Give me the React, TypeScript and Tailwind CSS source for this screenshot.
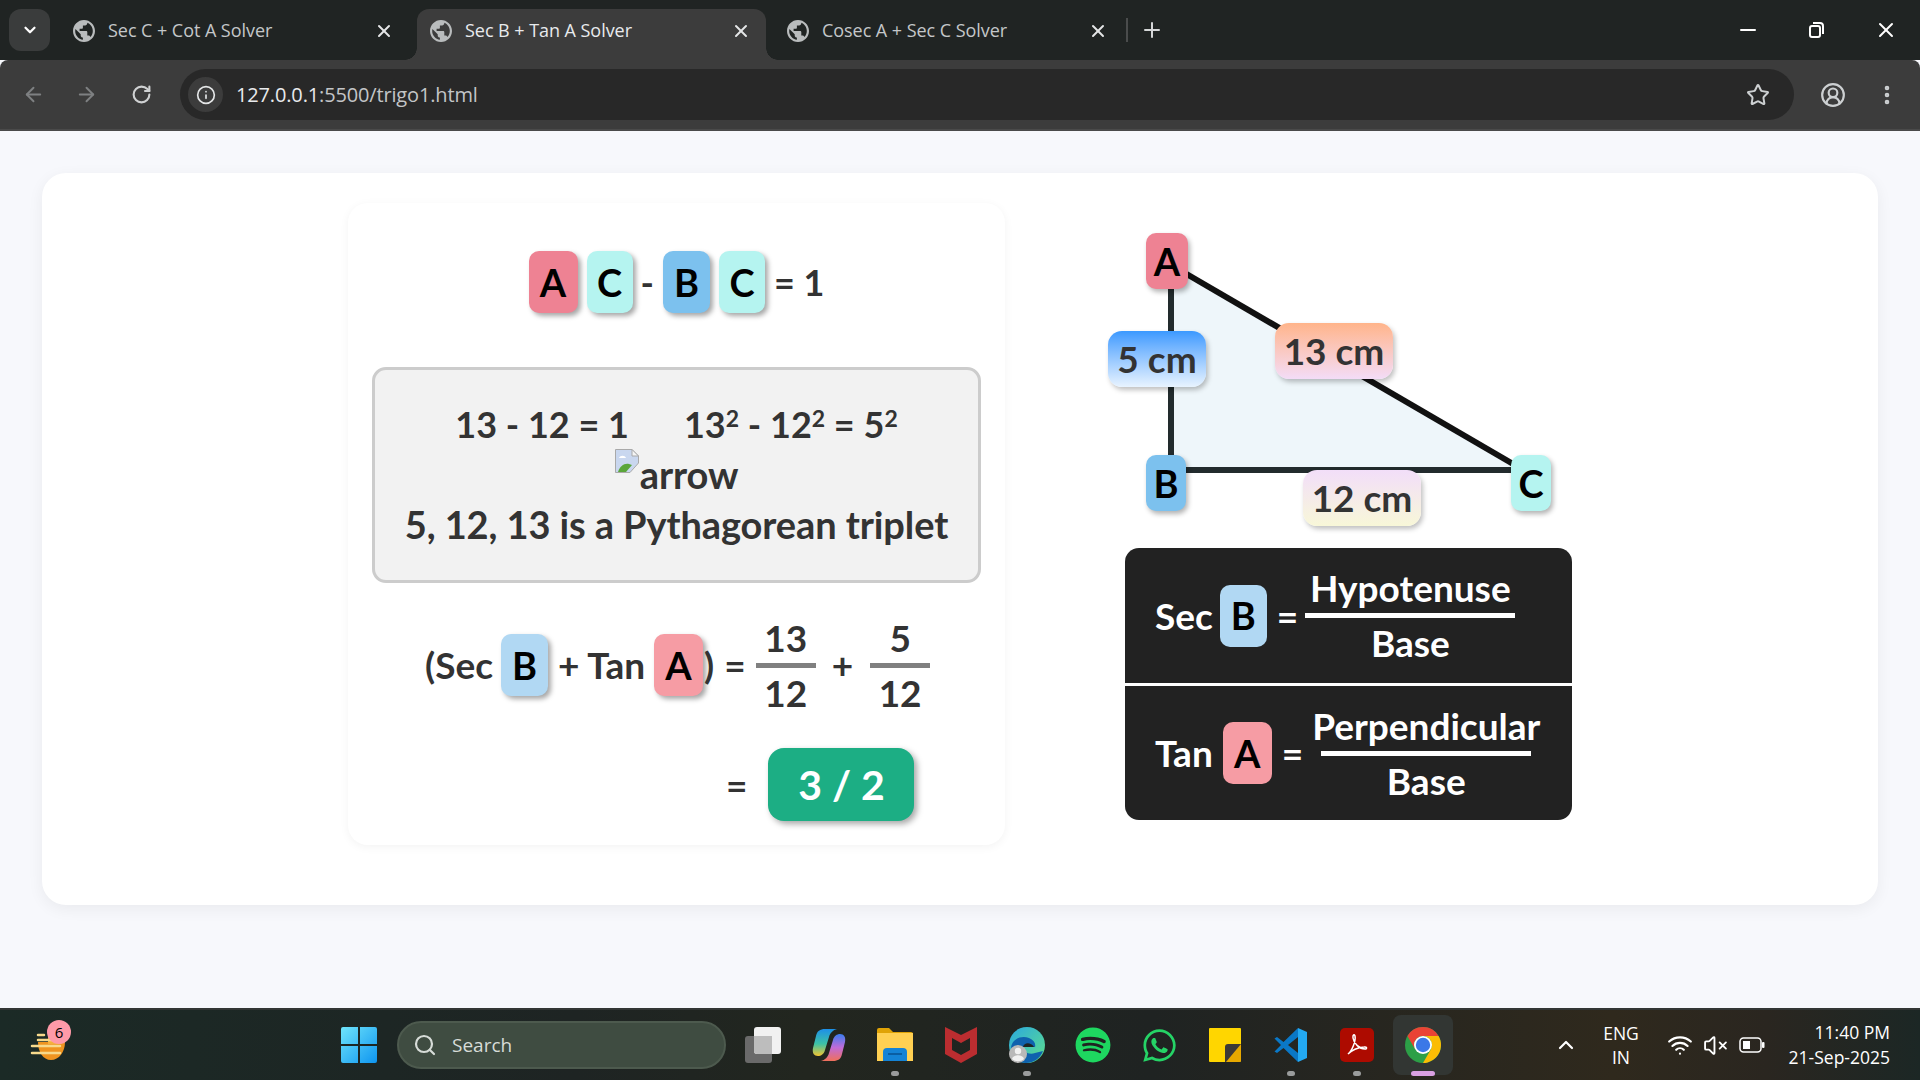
import { ArrowLeft, ArrowRight, ChevronDown, ChevronUp, CircleUserRound, EllipsisVertical, Info, Minus, Plus, RotateCw, Search, Star, VolumeX, Wifi, X } from 'lucide-react'
import type { ReactNode } from 'react'
import { FaSpotify, FaWhatsapp } from 'react-icons/fa'

const RED = 'bg-[#ee8293]'
const CYAN = 'bg-[#b5f4f0]'
const BLUE = 'bg-[#7cc1ee]'
const SOFT_BLUE = 'bg-[#b1d8f3]'
const SOFT_RED = 'bg-[#f69ca4]'

function Favicon() {
    return (
        <svg className="h-[22px] w-[22px] shrink-0" viewBox="2 2 20 20" fill="#b9bcbd">
            <path d="M12 2C6.48 2 2 6.48 2 12s4.48 10 10 10 10-4.48 10-10S17.52 2 12 2zm-1 17.93c-3.95-.49-7-3.85-7-7.93 0-.62.08-1.21.21-1.79L9 15v1c0 1.1.9 2 2 2v1.93zm6.9-2.54c-.26-.81-1-1.39-1.9-1.39h-1v-3c0-.55-.45-1-1-1H8v-2h2c.55 0 1-.45 1-1V7h2c1.1 0 2-.9 2-2v-.41c2.93 1.19 5 4.06 5 7.41 0 2.08-.8 3.97-2.1 5.39z" />
        </svg>
    )
}

function Tab({ title, active }: { title: string; active?: boolean }) {
    return (
        <div className={`relative flex h-[51px] w-[349px] items-center pb-[8px] pl-[13px] pr-[15px] ${active ? 'rounded-t-[12px] bg-[#3c3c3c] text-[#e8eaed]' : 'text-[#c4c7c9]'}`}>
            {active && <span className="absolute bottom-0 left-[-12px] h-[12px] w-[12px] bg-[radial-gradient(circle_at_0_0,transparent_11.5px,#3c3c3c_12px)]" />}
            {active && <span className="absolute bottom-0 right-[-12px] h-[12px] w-[12px] bg-[radial-gradient(circle_at_100%_0,transparent_11.5px,#3c3c3c_12px)]" />}
            <Favicon />
            <span className="ml-[13px] flex-1 text-[18px] tracking-[-0.05px]">{title}</span>
            <X size={20} strokeWidth={2.4} className="text-[#e4e6e7]" />
        </div>
    )
}

function BrowserChrome() {
    return (
        <div className="[font-family:'Open_Sans',sans-serif]">
            <div className="flex h-[60px] bg-[#202423]">
                <div className="ml-[9px] mr-[10px] mt-[9px] flex h-[42px] w-[41px] items-center justify-center rounded-[12px] bg-[#3a3c3c]">
                    <ChevronDown size={18} strokeWidth={3} className="text-white" />
                </div>
                <div className="mt-[9px] flex gap-[8px]">
                    <Tab title="Sec C + Cot A Solver" />
                    <Tab title="Sec B + Tan A Solver" active />
                    <Tab title="Cosec A + Sec C Solver" />
                </div>
                <div className="ml-[3px] mt-[18px] h-[24px] w-[2px] bg-[#4a4c4c]" />
                <Plus size={24} strokeWidth={2} className="ml-[12px] mt-[18px] text-[#d5d7d8]" />
                <div className="ml-auto mr-[22px] mt-[18px] flex h-[24px] items-center gap-[45px] text-white">
                    <Minus size={24} strokeWidth={2} />
                    <svg className="h-[24px] w-[24px] -translate-x-[1px]" viewBox="0 0 24 24" fill="none" stroke="currentColor" strokeWidth="2">
                        <rect x="6" y="8" width="10" height="11" rx="2" />
                        <path d="M9 5h7a3 3 0 0 1 3 3v8" />
                    </svg>
                    <X size={24} strokeWidth={2} />
                </div>
            </div>
            <div className="flex h-[71px] items-start rounded-t-[8px] border-b-2 border-[#4a4a4a] bg-[#3c3c3c] pt-[9px] text-[#c7c7c7]">
                <div className="flex h-[51px] w-[180px] items-center pl-[22px]">
                    <ArrowLeft size={23} className="text-[#7e8082]" />
                    <ArrowRight size={23} className="ml-[30px] text-[#7e8082]" />
                    <RotateCw size={21} strokeWidth={2.4} className="ml-[33px] text-[#cfd1d2]" />
                </div>
                <div className="flex h-[51px] w-[1614px] items-center rounded-full bg-[#282828] pl-[8px] pr-[24px]">
                    <div className="flex h-[35px] w-[35px] items-center justify-center rounded-full bg-[#3c3c3c]">
                        <Info size={20} className="text-[#e4e6e7]" />
                    </div>
                    <span className="ml-[13px] text-[20px] tracking-[-0.15px] text-[#e8eaed]">
                        127.0.0.1<span className="text-[#c3c5c7]">:5500/trigo1.html</span>
                    </span>
                    <Star size={24} className="ml-auto text-[#cdd0d2]" />
                </div>
                <div className="flex h-[51px] items-center pl-[26px]">
                    <CircleUserRound size={26} className="text-[#cdd0d2]" />
                    <EllipsisVertical size={24} strokeWidth={2.6} className="ml-[29px] text-[#cdd0d2]" />
                </div>
            </div>
        </div>
    )
}

function Chip({ label, className }: { label: string; className: string }) {
    return (
        <span className={`flex h-[62px] shrink-0 items-center justify-center rounded-[10px] text-[38px] font-bold text-black shadow-[3px_3px_5px_rgba(0,0,0,0.35)] ${className}`}>
            {label}
        </span>
    )
}

function Fraction({ top, bottom }: { top: string; bottom: string }) {
    return (
        <div className="flex w-[60px] flex-col items-center">
            <span className="leading-[40px]">{top}</span>
            <span className="my-[5px] h-[5px] w-full bg-[#808080]" />
            <span className="leading-[40px]">{bottom}</span>
        </div>
    )
}

function BrokenImage() {
    return (
        <svg className="h-[24px] w-[24px] shrink-0" viewBox="0 0 24 24">
            <path d="M0.5 0.5H17L23.5 7V14L15 23.5H0.5Z" fill="#c9d7ef" stroke="#a9a9a9" />
            <path d="M17 0.5V7H23.5Z" fill="#f5f5f5" stroke="#a9a9a9" />
            <path d="M4 9c1-3 6-3 7 0z" fill="#ffffff" />
            <path d="M3 23c2-6 6-9 11-8l3 1-6 7z" fill="#5aa63a" />
        </svg>
    )
}

function LeftPanel() {
    return (
        <div className="flex h-[642px] w-[657px] shrink-0 flex-col rounded-[20px] pt-[48px] text-[#333333] shadow-[0_2px_10px_rgba(0,0,0,0.05)]">
            <div className="flex h-[62px] items-center justify-center text-[36px] font-bold">
                <Chip label="A" className={`w-[49px] ${RED}`} />
                <Chip label="C" className={`ml-[9px] w-[46px] ${CYAN}`} />
                <span className="ml-[8px] mr-[9px]">-</span>
                <Chip label="B" className={`w-[47px] ${BLUE}`} />
                <Chip label="C" className={`ml-[9px] w-[46px] ${CYAN}`} />
                <span className="ml-[9px]">= 1</span>
            </div>

            <div className="mx-[24px] mt-[54px] h-[216px] rounded-[14px] border-[3px] border-[#cccccc] bg-[#f2f2f2] pt-[29px] text-center text-[38px] font-bold leading-[50px] tracking-[-0.1px]">
                <div className="flex justify-center gap-[55px] text-[36px] tracking-normal">
                    <span>13 - 12 = 1</span>
                    <span>
                        13<sup className="text-[23px]">2</sup> - 12<sup className="text-[23px]">2</sup> = 5<sup className="text-[23px]">2</sup>
                    </span>
                </div>
                <div className="flex justify-center">
                    <BrokenImage />
                    <span className="ml-[1px]">arrow</span>
                </div>
                <div>5, 12, 13 is a Pythagorean triplet</div>
            </div>

            <div className="mt-[37px] flex h-[90px] items-center pl-[77px] text-[37px] font-bold">
                <span>(Sec</span>
                <Chip label="B" className={`ml-[8px] w-[47px] ${SOFT_BLUE}`} />
                <span className="ml-[10px] w-[86px] whitespace-nowrap">+ Tan</span>
                <Chip label="A" className={`ml-[10px] w-[49px] ${SOFT_RED}`} />
                <span className="ml-[1px]">)</span>
                <span className="ml-[10px]">=</span>
                <div className="ml-[10px]">
                    <Fraction top="13" bottom="12" />
                </div>
                <span className="ml-[16px]">+</span>
                <div className="ml-[17px]">
                    <Fraction top="5" bottom="12" />
                </div>
            </div>

            <div className="mt-[38px] flex items-center pl-[378px] text-[37px] font-bold">
                <span>=</span>
                <span className="ml-[21px] flex h-[73px] w-[146px] items-center justify-center rounded-[16px] bg-[#1cae84] text-[41px] text-white shadow-[3px_3px_6px_rgba(0,0,0,0.35)]">
                    3 / 2
                </span>
            </div>
        </div>
    )
}

function Triangle() {
    const node = 'absolute flex h-[56px] items-center justify-center rounded-[10px] text-[38px] font-bold text-black shadow-[2px_3px_5px_rgba(0,0,0,0.3)]'
    const side = 'absolute flex h-[56px] items-center justify-center rounded-[14px] text-[37px] font-bold text-[#333333] shadow-[2px_3px_5px_rgba(0,0,0,0.25)]'
    return (
        <div className="relative h-[293px] w-[464px]">
            <svg className="absolute inset-0 h-full w-full" viewBox="0 0 464 293">
                <polygon points="62,32 62,237 415,237" fill="#eef6fa" />
                <line x1="63" y1="40" x2="63" y2="240" stroke="#222b2d" strokeWidth="6" />
                <line x1="63" y1="237" x2="410" y2="237" stroke="#222b2d" strokeWidth="6" />
                <line x1="70" y1="36" x2="412" y2="235" stroke="#111111" strokeWidth="6" />
            </svg>
            <span className={`${node} left-[38px] top-0 w-[42px] ${RED}`}>A</span>
            <span className={`${node} left-[38px] top-[222px] w-[40px] ${BLUE}`}>B</span>
            <span className={`${node} left-[403px] top-[222px] w-[40px] ${CYAN}`}>C</span>
            <span className={`${side} left-0 top-[98px] w-[98px] bg-linear-to-b from-[#3a99ff] to-[#e8f3ff]`}>5 cm</span>
            <span className={`${side} left-[167px] top-[90px] w-[118px] bg-linear-to-b from-[#ffb48a] to-[#f3dcf7]`}>13 cm</span>
            <span className={`${side} left-[195px] top-[237px] w-[118px] bg-linear-to-b from-[#f2def9] to-[#f8f7d8]`}>12 cm</span>
        </div>
    )
}

function Formula({ name, chip, top, fracGap, chipGap, rowClass }: { name: string; chip: ReactNode; top: string; fracGap: string; chipGap: string; rowClass: string }) {
    return (
        <div className={`flex items-center pl-[30px] text-[37px] font-bold text-white ${rowClass}`}>
            <span>{name}</span>
            <span className={chipGap}>{chip}</span>
            <span className="ml-[10px]">=</span>
            <div className={`flex w-[210px] flex-col items-center ${fracGap}`}>
                <span className="whitespace-nowrap leading-[44px]">{top}</span>
                <span className="my-[3px] h-[5px] w-full bg-white" />
                <span className="leading-[44px]">Base</span>
            </div>
        </div>
    )
}

function RightColumn() {
    return (
        <div className="ml-[103px] pt-[30px]">
            <Triangle />
            <div className="ml-[17px] mt-[22px] w-[447px] overflow-hidden rounded-[14px] bg-[#222222]">
                <Formula name="Sec" chip={<Chip label="B" className={`w-[47px] !shadow-none ${SOFT_BLUE}`} />} top="Hypotenuse" fracGap="ml-[7px]" chipGap="ml-[7px]" rowClass="h-[135px]" />
                <div className="h-[3px] bg-white" />
                <Formula name="Tan" chip={<Chip label="A" className={`w-[49px] !shadow-none ${SOFT_RED}`} />} top="Perpendicular" fracGap="ml-[18px]" chipGap="ml-[10px]" rowClass="h-[134px]" />
            </div>
        </div>
    )
}

function Slot({ children, dot }: { children: ReactNode; dot?: 'open' | 'active' }) {
    return (
        <div className="relative flex h-[60px] w-[66px] items-center justify-center">
            {dot === 'active' && <span className="absolute inset-y-0 left-[3px] w-[60px] rounded-[8px] bg-[#323633]" />}
            <span className="relative flex">{children}</span>
            {dot === 'open' && <span className="absolute bottom-[-1px] h-[5px] w-[8px] rounded-full bg-[#9a9c9c]" />}
            {dot === 'active' && <span className="absolute bottom-[-1px] h-[5px] w-[24px] rounded-full bg-[#d9a0e2]" />}
        </div>
    )
}

function TaskbarIcons() {
    return (
        <>
            <Slot>
                <svg className="h-[36px] w-[36px]" viewBox="0 0 36 36">
                    <rect x="0" y="9" width="27" height="27" rx="3" fill="#6a6a6a" />
                    <rect x="9" y="0" width="27" height="27" rx="3" fill="#f1f1f1" />
                    <path d="M9 9h18v18H12a3 3 0 0 1-3-3z" fill="#bdbdbd" />
                </svg>
            </Slot>
            <Slot>
                <svg className="h-[36px] w-[36px]" viewBox="0 0 36 36">
                    <defs>
                        <linearGradient id="copilotA" x1="0" y1="0" x2="0" y2="1">
                            <stop offset="0" stopColor="#1d8fe8" />
                            <stop offset="0.55" stopColor="#3dc2a5" />
                            <stop offset="1" stopColor="#f2c531" />
                        </linearGradient>
                        <linearGradient id="copilotB" x1="0" y1="0" x2="0" y2="1">
                            <stop offset="0" stopColor="#3a7df0" />
                            <stop offset="0.5" stopColor="#c06bd8" />
                            <stop offset="1" stopColor="#f0705a" />
                        </linearGradient>
                    </defs>
                    <path d="M14 2h12c-4 1-7 4-8 8l-4 13c-1 4-4 6-7 6-4 0-6-3-5-8l3-12c1-5 4-7 9-7z" fill="url(#copilotA)" />
                    <path d="M22 34H10c4-1 7-4 8-8l4-13c1-4 4-6 7-6 4 0 6 3 5 8l-3 12c-1 5-4 7-9 7z" fill="url(#copilotB)" />
                </svg>
            </Slot>
            <Slot dot="open">
                <svg className="h-[36px] w-[36px]" viewBox="0 0 36 36">
                    <path d="M0 3a2 2 0 0 1 2-2h10l4 4h18a2 2 0 0 1 2 2v6H0z" fill="#e0a306" />
                    <path d="M0 6h36v28H0z" fill="#ffd052" />
                    <path d="M6 25a4 4 0 0 1 4-4h16a4 4 0 0 1 4 4v9H6z" fill="#1483d6" />
                    <rect x="11" y="26" width="14" height="2" fill="#0a5ea3" />
                </svg>
            </Slot>
            <Slot>
                <svg className="h-[36px] w-[32px]" viewBox="0 0 32 36">
                    <path fillRule="evenodd" d="M0 0l16 8 16-8v27l-16 9-16-9zM7 11v12l9 5 9-5V11l-9 5z" fill="#bb2d30" />
                </svg>
            </Slot>
            <Slot dot="open">
                <svg className="h-[36px] w-[36px]" viewBox="0 0 36 36">
                    <defs>
                        <linearGradient id="edgeA" x1="0" y1="0" x2="1" y2="1">
                            <stop offset="0" stopColor="#2aa8e0" />
                            <stop offset="1" stopColor="#5fe08a" />
                        </linearGradient>
                    </defs>
                    <circle cx="18" cy="18" r="18" fill="url(#edgeA)" />
                    <path d="M2 22C2 12 12 8 20 11c5 2 7 6 6 9H14c0 5 6 8 12 6l8-2c-3 8-10 12-17 12C8 36 2 30 2 22z" fill="#0f62ae" />
                    <path d="M14 20c1-5 8-5 11 0z" fill="#1f2423" />
                    <circle cx="9" cy="27" r="9" fill="#b9b9b9" />
                    <circle cx="9" cy="24" r="3.2" fill="#f1f1f1" />
                    <path d="M3 32c1-5 11-5 12 0-3 3-9 3-12 0z" fill="#f1f1f1" />
                </svg>
            </Slot>
            <Slot>
                <FaSpotify size={36} className="text-[#1ed760]" />
            </Slot>
            <Slot>
                <FaWhatsapp size={37} className="text-[#25d366]" />
            </Slot>
            <Slot>
                <svg className="h-[34px] w-[32px]" viewBox="0 0 32 34">
                    <path d="M0 1a1 1 0 0 1 1-1h30a1 1 0 0 1 1 1v32a1 1 0 0 1-1 1H1a1 1 0 0 1-1-1z" fill="#ffd600" />
                    <path d="M16 34V19a3 3 0 0 1 3-3h13v17a1 1 0 0 1-1 1z" fill="#3c3a36" />
                    <path d="M32 16v17a1 1 0 0 1-1 1H17z" fill="#e6a800" />
                </svg>
            </Slot>
            <Slot dot="open">
                <svg className="h-[36px] w-[36px]" viewBox="0 0 36 36">
                    <path d="M25 1L10.500 15 4 10 1.500 11.500 8 18l-6.500 6.500L4 26l6.500-5L25 35v-9L15 18l10-8z" fill="#0a78c7" />
                    <path d="M25 1l9 4v26l-9 4z" fill="#23a9f2" />
                </svg>
            </Slot>
            <Slot dot="open">
                <svg className="h-[34px] w-[34px]" viewBox="0 0 34 34">
                    <rect width="34" height="34" rx="5" fill="#ad0b00" />
                    <path d="M8 26c4-3 8-13 7-18-.5-2.500-2.500-1-2 2 .8 5 6 11 12 11 2.500 0 2-2.500-1-2-5 .5-12 3-16 7z" fill="none" stroke="#ffffff" strokeWidth="1.500" />
                </svg>
            </Slot>
            <Slot dot="active">
                <svg className="h-[36px] w-[36px]" viewBox="4 4 40 40">
                    <circle cx="24" cy="24" r="20" fill="#2c9f47" />
                    <path d="M24 4a20 20 0 0 1 17.32 10H24a10 10 0 0 0-8.66 15L6.680 14A20 20 0 0 1 24 4z" fill="#ea4335" />
                    <path d="M41.320 14A20 20 0 0 1 24 44l8.660-15A10 10 0 0 0 24 14z" fill="#fbbc04" />
                    <circle cx="24" cy="24" r="10" fill="#ffffff" />
                    <circle cx="24" cy="24" r="8" fill="#3b78e7" />
                </svg>
            </Slot>
        </>
    )
}

function Taskbar() {
    return (
        <div className="flex h-[72px] items-center border-t-2 border-[#333635] bg-[linear-gradient(90deg,#1b2a26_0%,#1e2423_30%,#22261f_42%,#1f2322_60%,#2f291d_84%,#2a2620_92%,#1c2725_100%)] [font-family:'Open_Sans',sans-serif] text-white">
            <div className="relative ml-[30px] h-[42px] w-[36px]">
                <svg className="absolute left-0 top-0 h-[36px] w-[36px]" viewBox="0 0 36 36">
                    <path d="M8 18h27c0 10-6 18-14 18S8 28 8 18z" fill="#ef9420" />
                    <path d="M18 11h14v9H18z" fill="#f4b03c" />
                    <path d="M8 11h6M8 16h16M2 22h28M2 29h28" stroke="#f7d98c" strokeWidth="2.500" strokeLinecap="round" />
                </svg>
                <span className="absolute left-[17px] top-[-4px] flex h-[24px] w-[24px] items-center justify-center rounded-full bg-[#ff9aa8] text-[15px] text-black">6</span>
            </div>
            <svg className="ml-[275px] h-[36px] w-[36px]" viewBox="0 0 36 36">
                <defs>
                    <linearGradient id="winLogo" x1="0" y1="0" x2="1" y2="1">
                        <stop offset="0" stopColor="#6fe4fb" />
                        <stop offset="1" stopColor="#0e95f0" />
                    </linearGradient>
                </defs>
                <path d="M0 2a2 2 0 0 1 2-2h15v17H0zM19 0h15a2 2 0 0 1 2 2v15H19zM0 19h17v17H2a2 2 0 0 1-2-2zM19 19h17v15a2 2 0 0 1-2 2H19z" fill="url(#winLogo)" />
            </svg>
            <div className="ml-[20px] mr-[4px] flex h-[48px] w-[329px] items-center rounded-full border-2 border-[#4d5a4e] bg-[#3f4c41] pl-[14px] text-[#d7dcd8]">
                <Search size={24} strokeWidth={2.2} />
                <span className="ml-[15px] text-[19px]">Search</span>
            </div>
            <TaskbarIcons />
            <ChevronUp size={24} strokeWidth={2.2} className="ml-[98px]" />
            <div className="ml-[21px] w-[44px] text-center text-[17.5px] leading-[24px]">
                <div>ENG</div>
                <div>IN</div>
            </div>
            <Wifi size={26} strokeWidth={2} className="ml-[24px]" />
            <VolumeX size={25} strokeWidth={1.8} className="ml-[10px]" />
            <svg className="ml-[11px] h-[16px] w-[26px]" viewBox="0 0 26 16" fill="none">
                <rect x="1" y="1" width="21" height="14" rx="3.500" stroke="#ffffff" strokeWidth="1.500" />
                <rect x="4" y="4" width="7" height="8" fill="#ffffff" />
                <rect x="23" y="5" width="2.500" height="6" rx="1" fill="#ffffff" />
            </svg>
            <div className="ml-auto mr-[30px] text-right text-[17.5px] leading-[25px]">
                <div>11:40 PM</div>
                <div>21-Sep-2025</div>
            </div>
        </div>
    )
}

export default function App(): JSX.Element {
    return (
        <div className="flex h-[1080px] w-[1920px] flex-col overflow-hidden bg-[#f7f8fc] [font-family:Lato,sans-serif]">
            <BrowserChrome />
            <div className="flex-1 px-[42px] pt-[42px]">
                <div className="flex h-[732px] rounded-[24px] bg-white pl-[306px] pt-[30px] shadow-[0_4px_16px_rgba(0,0,0,0.06)]">
                    <LeftPanel />
                    <RightColumn />
                </div>
            </div>
            <Taskbar />
        </div>
    )
}
